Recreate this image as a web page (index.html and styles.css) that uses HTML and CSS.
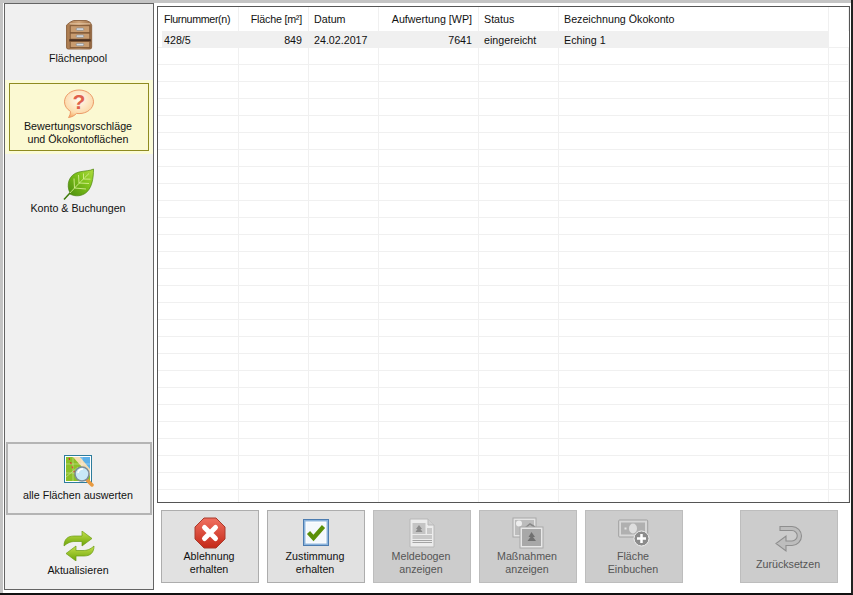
FILE: index.html
```html
<!DOCTYPE html>
<html lang="de">
<head>
<meta charset="utf-8">
<title>Ökokonto</title>
<link rel="stylesheet" href="styles.css">
</head>
<body>
<div class="window">
  <aside class="sidebar">
    <nav class="nav">
      <div class="nav-item first">
        <svg class="icon" viewBox="0 0 30 32" width="30" height="32">
          <defs><linearGradient id="wood" x1="0" y1="0" x2="1" y2="0"><stop offset="0" stop-color="#a8784c"/><stop offset=".5" stop-color="#d2a67a"/><stop offset="1" stop-color="#9a6c44"/></linearGradient></defs>
          <path d="M4 2.500 8 .5h14l4 2 1.500 3V29a2 2 0 0 1-2 2h-23a2 2 0 0 1-2-2V5.500z" fill="url(#wood)" stroke="#8c6240"/>
          <path d="M4 4h22" stroke="#e3c8a8" stroke-width="1"/>
          <rect x="4.500" y="6" width="21" height="7.500" fill="#c89c70" stroke="#7e5634"/>
          <rect x="4.500" y="14" width="21" height="6.500" fill="#c89c70" stroke="#7e5634"/>
          <rect x="3.500" y="20.500" width="23" height="2.500" fill="#4a3020"/>
          <rect x="4.500" y="23" width="21" height="6.500" fill="#c89c70" stroke="#7e5634"/>
          <rect x="11" y="8.500" width="8" height="2.500" rx="1" fill="#d8dde2" stroke="#767f88" stroke-width=".6"/>
          <rect x="11" y="16" width="8" height="2.500" rx="1" fill="#d8dde2" stroke="#767f88" stroke-width=".6"/>
          <rect x="11" y="25" width="8" height="2.500" rx="1" fill="#d8dde2" stroke="#767f88" stroke-width=".6"/>
        </svg>
        <span>Flächenpool</span>
      </div>
      <div class="nav-band">
        <div class="nav-item active">
          <svg class="icon" viewBox="0 0 32 30" width="32" height="30">
            <defs><radialGradient id="bubble" cx=".5" cy=".35" r=".7"><stop offset="0" stop-color="#fffaf0"/><stop offset=".7" stop-color="#fcdcae"/><stop offset="1" stop-color="#f6a860"/></radialGradient></defs>
            <path d="M16 1C7.700 1 1.500 6.300 1.500 12.800c0 4 2.300 7.400 5.900 9.500.2 2.300-.6 4.500-1.900 6.200 3.400-.4 6.100-2 8-4.100.8.1 1.600.2 2.500.2 8.300 0 14.500-5.300 14.500-11.800S24.300 1 16 1z" fill="url(#bubble)" stroke="#ec9a68" stroke-width="1"/>
            <text x="16" y="20" class="qmark">?</text>
          </svg>
          <span>Bewertungsvorschläge<br>und Ökokontoflächen</span>
        </div>
      </div>
      <div class="nav-item third">
        <svg class="icon" viewBox="0 0 32 32" width="32" height="32">
          <defs><linearGradient id="leaf" x1="0" y1="1" x2="1" y2="0"><stop offset="0" stop-color="#4a8c0c"/><stop offset=".6" stop-color="#82c41c"/><stop offset="1" stop-color="#b0dc40"/></linearGradient></defs>
          <path d="M7 25C3 17 5.500 6.500 16 4c6-1.400 11-1 14.500-3 0 9-1.500 20-8.500 24.500-5.500 3.500-11.500 2.500-15 .5z" fill="url(#leaf)" stroke="#4c8410" stroke-width=".7"/>
          <path d="M1.500 31C7 25 14 17 26 5.500M11.500 20 11 10.500M16 15l-.5-8M20.500 11l0-5.500M11.500 20l11.500 1M16 15l10 .5M20.500 11l7 .2" fill="none" stroke="#d4ee8c" stroke-width=".9"/>
          <path d="M1 31.500 7 25" stroke="#3f7a0c" stroke-width="1.500"/>
        </svg>
        <span>Konto &amp; Buchungen</span>
      </div>
    </nav>
    <div class="side-bottom">
      <button class="side-btn">
        <svg class="icon" viewBox="0 0 30 32" width="30" height="32">
          <rect x=".5" y=".5" width="27" height="27" fill="#fff" stroke="#2c7c9c"/>
          <rect x="2" y="2" width="24" height="24" fill="#5cb0e8"/>
          <path d="M2 2h9l15 18v6H2z" fill="#8cc028"/>
          <path d="M9 2h7l10 12v7z" fill="#f4dcb0"/>
          <path d="M5 3l7 19" stroke="#e02020" stroke-width="1.200" stroke-dasharray="2 2.500"/>
          <path d="M2 22 14 12M9 2v24M2 9h24M18 2v24M2 18h24" stroke="#fff" stroke-opacity=".45" stroke-width=".7"/>
          <path d="M22 24l6 6" stroke="#e89a40" stroke-width="3.500" stroke-linecap="round"/>
          <circle cx="18" cy="19" r="7" fill="#c8e8f8" stroke="#7c8c98" stroke-width="1.500"/>
          <path d="M14 18a4.500 4.500 0 0 1 5-4" stroke="#fff" stroke-width="1.500" fill="none"/>
        </svg>
        <span>alle Flächen auswerten</span>
      </button>
      <div class="nav-item refresh">
        <svg class="icon" viewBox="0 0 32 30" width="32" height="30">
          <defs><linearGradient id="arrow" x1="0" y1="0" x2="0" y2="1"><stop offset="0" stop-color="#c4e04c"/><stop offset="1" stop-color="#6ca408"/></linearGradient></defs>
          <path d="M1 15C1 8 5 5 11 5h8V0l10 7.500L19 15v-4.500h-7c-4 0-7 1-11 4.500z" fill="url(#arrow)" stroke="#6c9c14" stroke-width=".7"/>
          <path d="M31 15c0 7-4 10-10 10h-8v5L3 22.500 13 15v4.500h7c4 0 7-1 11-4.500z" fill="url(#arrow)" stroke="#6c9c14" stroke-width=".7"/>
        </svg>
        <span>Aktualisieren</span>
      </div>
    </div>
  </aside>
  <main class="main">
    <div class="grid-box">
      <table class="grid">
        <colgroup>
          <col class="c0"><col class="c1"><col class="c2"><col class="c3"><col class="c4"><col class="c5"><col class="c6"><col>
        </colgroup>
        <thead>
          <tr>
            <th class="c-start"></th><th class="tight">Flurnummer(n)</th><th class="num tight-s">Fläche [m²]</th><th>Datum</th><th class="num">Aufwertung [WP]</th><th>Status</th><th>Bezeichnung Ökokonto</th><th class="filler"></th>
          </tr>
        </thead>
        <tbody>
          <tr class="data"><td class="c-start"></td><td>428/5</td><td class="num">849</td><td>24.02.2017</td><td class="num">7641</td><td>eingereicht</td><td>Eching 1</td><td class="filler"></td></tr>
          <tr><td></td><td></td><td></td><td></td><td></td><td></td><td></td><td></td></tr>
          <tr><td></td><td></td><td></td><td></td><td></td><td></td><td></td><td></td></tr>
          <tr><td></td><td></td><td></td><td></td><td></td><td></td><td></td><td></td></tr>
          <tr><td></td><td></td><td></td><td></td><td></td><td></td><td></td><td></td></tr>
          <tr><td></td><td></td><td></td><td></td><td></td><td></td><td></td><td></td></tr>
          <tr><td></td><td></td><td></td><td></td><td></td><td></td><td></td><td></td></tr>
          <tr><td></td><td></td><td></td><td></td><td></td><td></td><td></td><td></td></tr>
          <tr><td></td><td></td><td></td><td></td><td></td><td></td><td></td><td></td></tr>
          <tr><td></td><td></td><td></td><td></td><td></td><td></td><td></td><td></td></tr>
          <tr><td></td><td></td><td></td><td></td><td></td><td></td><td></td><td></td></tr>
          <tr><td></td><td></td><td></td><td></td><td></td><td></td><td></td><td></td></tr>
          <tr><td></td><td></td><td></td><td></td><td></td><td></td><td></td><td></td></tr>
          <tr><td></td><td></td><td></td><td></td><td></td><td></td><td></td><td></td></tr>
          <tr><td></td><td></td><td></td><td></td><td></td><td></td><td></td><td></td></tr>
          <tr><td></td><td></td><td></td><td></td><td></td><td></td><td></td><td></td></tr>
          <tr><td></td><td></td><td></td><td></td><td></td><td></td><td></td><td></td></tr>
          <tr><td></td><td></td><td></td><td></td><td></td><td></td><td></td><td></td></tr>
          <tr><td></td><td></td><td></td><td></td><td></td><td></td><td></td><td></td></tr>
          <tr><td></td><td></td><td></td><td></td><td></td><td></td><td></td><td></td></tr>
          <tr><td></td><td></td><td></td><td></td><td></td><td></td><td></td><td></td></tr>
          <tr><td></td><td></td><td></td><td></td><td></td><td></td><td></td><td></td></tr>
          <tr><td></td><td></td><td></td><td></td><td></td><td></td><td></td><td></td></tr>
          <tr><td></td><td></td><td></td><td></td><td></td><td></td><td></td><td></td></tr>
          <tr><td></td><td></td><td></td><td></td><td></td><td></td><td></td><td></td></tr>
          <tr><td></td><td></td><td></td><td></td><td></td><td></td><td></td><td></td></tr>
          <tr><td></td><td></td><td></td><td></td><td></td><td></td><td></td><td></td></tr>
          <tr><td></td><td></td><td></td><td></td><td></td><td></td><td></td><td></td></tr>
        </tbody>
      </table>
    </div>
    <div class="actions">
      <button class="action">
        <svg class="icon" viewBox="0 0 32 32" width="32" height="32">
          <defs><linearGradient id="stop" x1="0" y1="0" x2="0" y2="1"><stop offset="0" stop-color="#f07060"/><stop offset="1" stop-color="#c42818"/></linearGradient></defs>
          <path d="M10 1h12l9 9v12l-9 9H10l-9-9V10z" fill="url(#stop)" stroke="#a83a2c"/>
          <path d="M10.500 10.500l11 11M21.500 10.500l-11 11" stroke="#fff" stroke-width="5" stroke-linecap="round"/>
        </svg>
        <span>Ablehnung<br>erhalten</span>
      </button>
      <button class="action">
        <svg class="icon" viewBox="0 0 32 32" width="32" height="32">
          <rect x="3.500" y="2.500" width="25" height="26" fill="#8cb4dc" stroke="#4c7cb0"/>
          <rect x="6" y="5" width="20" height="21" fill="#f4f8fc" stroke="#fff"/>
          <path d="M8.500 15.500l5 5.500 10-11.500" fill="none" stroke="#5a9008" stroke-width="4.200"/>
        </svg>
        <span>Zustimmung<br>erhalten</span>
      </button>
      <button class="action off">
        <svg class="icon" viewBox="0 0 26 30" width="26" height="30">
          <path d="M1 1h18l6 6v22H1z" fill="#ececec" stroke="#b8b8b8"/>
          <path d="M19 1v6h6" fill="#d0d0d0" stroke="#b8b8b8"/>
          <rect x="3.500" y="5" width="13" height="11" fill="#c4c4c4"/>
          <path d="M10 7l3 4h-1.500l2 3h-7l2-3H7z" fill="#8a8a8a"/>
          <path d="M18 11h5M18 13h5M18 15h5M3.500 18h19.500M3.500 20h19.500M3.500 22.500h19.500M3.500 24.500h19.500" stroke="#a4a4a4"/>
        </svg>
        <span>Meldebogen<br>anzeigen</span>
      </button>
      <button class="action off">
        <svg class="icon" viewBox="0 0 32 32" width="32" height="32">
          <rect x="1" y="1" width="23" height="19" fill="#e4e4e4" stroke="#a8a8a8"/>
          <rect x="3" y="3" width="19" height="15" fill="#bcbcbc"/>
          <circle cx="7" cy="6.500" r="3" fill="#eee"/>
          <path d="M13 11l5-4 5 3" fill="none" stroke="#888" stroke-width="1.500"/>
          <rect x="8" y="10" width="23" height="21" fill="#e8e8e8" stroke="#a8a8a8"/>
          <rect x="10" y="12" width="19" height="17" fill="#a8a8a8"/>
          <path d="M19.500 15l3.500 5h-2l3 4h-8.500l3-4h-2z" fill="#707070"/>
        </svg>
        <span>Maßnahmen<br>anzeigen</span>
      </button>
      <button class="action off">
        <svg class="icon" viewBox="0 0 32 28" width="32" height="28">
          <rect x=".7" y="1" width="29" height="17" rx="1" fill="#d8d8d8" stroke="#a0a0a0"/>
          <rect x="3" y="3.500" width="24" height="12" fill="#b0b0b0"/>
          <ellipse cx="15" cy="9.500" rx="4" ry="5" fill="#dedede"/>
          <rect x="6.500" y="8.500" width="2" height="2" fill="#e4e4e4"/>
          <circle cx="23.500" cy="19.500" r="7.500" fill="#8c8c8c" stroke="#eee" stroke-width="1"/>
          <path d="M23.500 15v9M19 19.500h9" stroke="#fff" stroke-width="2.500"/>
        </svg>
        <span>Fläche<br>Einbuchen</span>
      </button>
      <button class="action off reset">
        <svg class="icon" viewBox="0 0 28 28" width="28" height="28">
          <path d="M5 1.500h12a9.500 9.500 0 0 1 0 19H11v5.500L1 18.500 11 11v5h6a5.200 5.200 0 0 0 0-10.500H5z" fill="#bdbdbd" stroke="#8e8e8e" stroke-width="1.100"/>
        </svg>
        <span>Zurücksetzen</span>
      </button>
    </div>
  </main>
</div>
</body>
</html>
```

FILE: styles.css
```css
* { box-sizing: border-box; }
html, body { margin: 0; padding: 0; background: #fff; }
body {
  width: 853px;
  height: 595px;
  overflow: hidden;
  font-family: "Liberation Sans", Arial, sans-serif;
  font-size: 10.7px;
  color: #111;
}
.window {
  width: 853px;
  height: 595px;
  display: flex;
  padding: 3px 3px 3px 4px;
  border-right: 2px solid #222;
  border-bottom: 2px solid #111;
  box-shadow: inset 3px 3px 0 #c4c4c4;
  gap: 3px;
}
.sidebar {
  width: 150px;
  flex: none;
  height: 587px;
  background: #f0f0f0;
  border: 1px solid #646464;
  display: flex;
  flex-direction: column;
  justify-content: space-between;
}
.nav { display: flex; flex-direction: column; }
.icon { display: block; flex: none; }
.nav-item span, .side-btn span, .action span { margin-right: 2px; }
.nav-item {
  display: flex;
  flex-direction: column;
  align-items: center;
  text-align: center;
  line-height: 13px;
}
.nav-item.first { padding-top: 16px; height: 76px; }
.nav-item.first .icon { width: 28px; height: 30px; margin: 0 0 2px 2px; }
.nav-band {
  background: #fbfbd8;
  height: 74px;
  padding: 3px 4px;
}
.nav-item.active {
  height: 68px;
  background: #fbf9d2;
  border: 1px solid #8f8b20;
  padding-top: 5px;
  gap: 1px;
}
.nav-item.third { padding-top: 14px; gap: 2px; }
.side-bottom { display: flex; flex-direction: column; align-items: center; }
.side-btn {
  width: 146px;
  height: 73px;
  background: #eeeeee;
  border: 2px solid #b4b4b4;
  font: inherit;
  color: inherit;
  padding: 11px 0 0;
  display: flex;
  flex-direction: column;
  align-items: center;
  gap: 2px;
  line-height: 13px;
}
.refresh { padding: 16px 0 12px; gap: 3px; }
.main {
  width: 693px;
  flex: none;
  display: flex;
  flex-direction: column;
  height: 587px;
}
.grid-box {
  margin-top: 3px;
  height: 497px;
  border: 1px solid #555;
  background: #fff;
  overflow: hidden;
}
.grid {
  border-collapse: separate;
  border-spacing: 0;
  table-layout: fixed;
  width: 691px;
}
.c0 { width: 4px; }
.c1 { width: 77px; }
.c2 { width: 70px; }
.c3 { width: 70px; }
.c4 { width: 100px; }
.c5 { width: 80px; }
.c6 { width: 270px; }
th, td {
  padding: 0 5px 0 5px;
  font-weight: normal;
  text-align: left;
  white-space: nowrap;
  overflow: hidden;
  height: 17px;
  border-right: 1px solid #f0f0f0;
  border-bottom: 1px solid #f0f0f0;
  line-height: 16px;
}
th { height: 24px; border-bottom: 0; }
th:first-child, td:first-child { padding: 0; border-right: 0; }
th:nth-child(2), td:nth-child(2) { padding-left: 2px; }
th.num { text-align: right; padding-right: 6px; }
td.num { text-align: right; padding-right: 7px; }
th.tight { letter-spacing: -.35px; }
th.tight-s { letter-spacing: -.2px; }
.data td { background: #f0f0f0; border-right: 0; padding-top: 2px; line-height: 14px; }
.data td.c-start, .data td.filler { background: #fff; }
.actions {
  display: flex;
  gap: 8px;
  padding: 7px 0 0 4px;
}
.action {
  width: 98px;
  height: 73px;
  flex: none;
  background: #e1e1e1;
  border: 1px solid #adadad;
  font: inherit;
  color: #111;
  padding: 6px 0 0;
  display: flex;
  flex-direction: column;
  align-items: center;
  line-height: 13px;
  gap: 1px;
}
.action .icon { height: 32px; }
.action.off { background: #cccccc; border-color: #bdbdbd; color: #555; }
.action.reset { margin-left: 49px; gap: 3px; padding-top: 12px; }
.qmark {
  font-family: "Liberation Sans", Arial, sans-serif;
  font-weight: bold;
  font-size: 21px;
  fill: #e0604c;
  text-anchor: middle;
}
```
